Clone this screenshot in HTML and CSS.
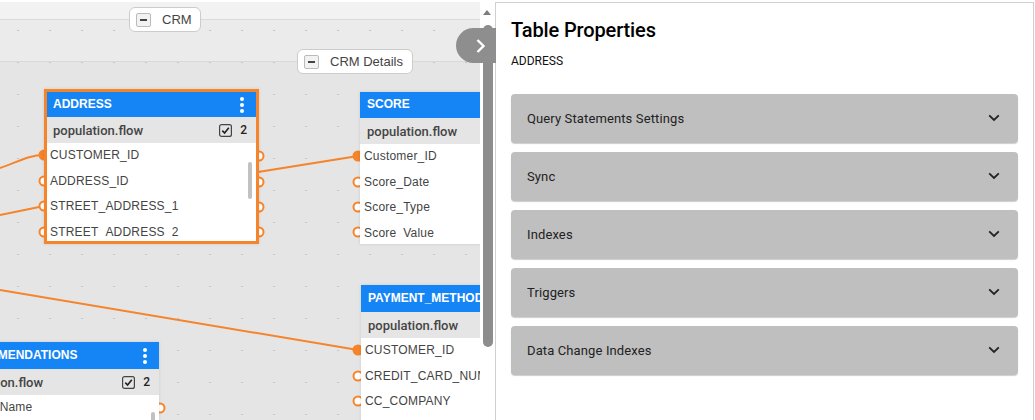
FILE: index.html
```html
<!DOCTYPE html>
<html lang="en">
<head>
    <meta charset="UTF-8">
    <meta name="viewport" content="width=device-width, initial-scale=1.0">
    <title>Table Properties</title>
    <link rel="stylesheet" href="styles.css">
</head>
<body>

<div class="app">
    <div class="canvas">
        <div class="band band-crm"></div>
        <div class="band band-details"></div>

        <svg class="wires" width="480" height="418" viewBox="0 2 480 418">
            <defs>
                <pattern id="dots" x="17" y="30" width="32" height="32" patternUnits="userSpaceOnUse">
                    <rect width="2" height="1" fill="#c4c4c4"></rect>
                </pattern>
            </defs>
            <rect x="0" y="2" width="480" height="418" fill="url(#dots)"></rect>
            <path class="wire" d="M0 168 C18 162 28 155 44 155"></path>
            <path class="wire" d="M0 215 L44 206"></path>
            <path class="wire" d="M258 172 L358 156"></path>
            <path class="wire" d="M0 290 L358 350"></path>
            <circle class="port on" cx="44" cy="155" r="4.5"></circle>
            <circle class="port" cx="44" cy="181" r="4.5"></circle>
            <circle class="port" cx="44" cy="206" r="4.5"></circle>
            <circle class="port" cx="44" cy="232" r="4.5"></circle>
            <circle class="port" cx="259" cy="156" r="4.5"></circle>
            <circle class="port" cx="259" cy="182" r="4.5"></circle>
            <circle class="port" cx="259" cy="207" r="4.5"></circle>
            <circle class="port" cx="259" cy="232" r="4.5"></circle>
            <circle class="port on" cx="358" cy="156" r="4.5"></circle>
            <circle class="port" cx="358" cy="182" r="4.5"></circle>
            <circle class="port" cx="358" cy="207" r="4.5"></circle>
            <circle class="port" cx="358" cy="232" r="4.5"></circle>
            <circle class="port on" cx="358" cy="350" r="4.5"></circle>
            <circle class="port" cx="358" cy="376" r="4.5"></circle>
            <circle class="port" cx="358" cy="401" r="4.5"></circle>
            <circle class="port" cx="160" cy="408" r="4.5"></circle>
        </svg>

        <div class="group-label label-crm">
            <span class="collapse-btn"></span>
            <span>CRM</span>
        </div>
        <div class="group-label label-details">
            <span class="collapse-btn"></span>
            <span>CRM Details</span>
        </div>

        <div class="node node-address selected">
            <div class="node-head">
                <span>ADDRESS</span>
                <span class="kebab"><i></i><i></i><i></i></span>
            </div>
            <div class="node-sub">
                <span>population.flow</span>
                <span class="sub-right">
                    <svg class="check" width="13" height="13" viewBox="0 0 13 13"><rect x="0.6" y="0.6" width="11.8" height="11.8" rx="2" fill="none" stroke="#444" stroke-width="1.2"></rect><path d="M3.3 6.6 L5.6 9 L9.8 3.8" fill="none" stroke="#222" stroke-width="1.6"></path></svg>
                    <b>2</b>
                </span>
            </div>
            <ul class="node-rows">
                <li>CUSTOMER_ID</li>
                <li>ADDRESS_ID</li>
                <li>STREET_ADDRESS_1</li>
                <li>STREET_ADDRESS_2</li>
            </ul>
            <span class="node-scroll"></span>
        </div>

        <div class="node node-score">
            <div class="node-head"><span>SCORE</span></div>
            <div class="node-sub"><span>population.flow</span></div>
            <ul class="node-rows">
                <li>Customer_ID</li>
                <li>Score_Date</li>
                <li>Score_Type</li>
                <li>Score_Value</li>
            </ul>
        </div>

        <div class="node node-payment">
            <div class="node-head"><span>PAYMENT_METHODS</span></div>
            <div class="node-sub"><span>population.flow</span></div>
            <ul class="node-rows">
                <li>CUSTOMER_ID</li>
                <li>CREDIT_CARD_NUMBER</li>
                <li>CC_COMPANY</li>
            </ul>
        </div>

        <div class="node node-recs">
            <div class="node-head">
                <span>RECOMMENDATIONS</span>
                <span class="kebab"><i></i><i></i><i></i></span>
            </div>
            <div class="node-sub">
                <span>population.flow</span>
                <span class="sub-right">
                    <svg class="check" width="13" height="13" viewBox="0 0 13 13"><rect x="0.6" y="0.6" width="11.8" height="11.8" rx="2" fill="none" stroke="#444" stroke-width="1.2"></rect><path d="M3.3 6.6 L5.6 9 L9.8 3.8" fill="none" stroke="#222" stroke-width="1.6"></path></svg>
                    <b>2</b>
                </span>
            </div>
            <ul class="node-rows">
                <li>Contact_Name</li>
            </ul>
            <span class="node-scroll"></span>
        </div>
    </div>

    <div class="scrollbar">
        <span class="scroll-up"></span>
        <span class="scroll-thumb"></span>
    </div>

    <div class="panel">
        <button class="panel-toggle" type="button">
            <svg width="12" height="16" viewBox="0 0 12 16"><path d="M2.5 2 L8.5 8 L2.5 14" fill="none" stroke="#fff" stroke-width="2.4"></path></svg>
        </button>
        <h1>Table Properties</h1>
        <p class="panel-table">ADDRESS</p>

        <div class="accordion">
            <span>Query Statements Settings</span>
            <svg class="chevron" width="12" height="8" viewBox="0 0 12 8"><path d="M1.2 1.4 L6 6 L10.8 1.4" fill="none" stroke="#222" stroke-width="1.8"></path></svg>
        </div>
        <div class="accordion">
            <span>Sync</span>
            <svg class="chevron" width="12" height="8" viewBox="0 0 12 8"><path d="M1.2 1.4 L6 6 L10.8 1.4" fill="none" stroke="#222" stroke-width="1.8"></path></svg>
        </div>
        <div class="accordion">
            <span>Indexes</span>
            <svg class="chevron" width="12" height="8" viewBox="0 0 12 8"><path d="M1.2 1.4 L6 6 L10.8 1.4" fill="none" stroke="#222" stroke-width="1.8"></path></svg>
        </div>
        <div class="accordion">
            <span>Triggers</span>
            <svg class="chevron" width="12" height="8" viewBox="0 0 12 8"><path d="M1.2 1.4 L6 6 L10.8 1.4" fill="none" stroke="#222" stroke-width="1.8"></path></svg>
        </div>
        <div class="accordion">
            <span>Data Change Indexes</span>
            <svg class="chevron" width="12" height="8" viewBox="0 0 12 8"><path d="M1.2 1.4 L6 6 L10.8 1.4" fill="none" stroke="#222" stroke-width="1.8"></path></svg>
        </div>
    </div>
</div>

</body>
</html>
```

FILE: styles.css
```css
* {
    box-sizing: border-box;
}

html, body {
    height: 100%;
}

body {
    margin: 0;
    padding-top: 2px;
    overflow: hidden;
    background-color: #fff;
    font-family: Roboto, Arial, sans-serif;
    color: #333;
}

.app {
    display: flex;
    height: 418px;
}

/* diagram */

.canvas {
    position: relative;
    flex: 0 0 480px;
    overflow: hidden;
    background-color: #e5e5e5;
}

.band {
    position: absolute;
    left: 0;
    width: 100%;
    border-bottom: 1px solid #d9d9d9;
}

.band-crm {
    top: 0;
    height: 18px;
    background-color: #f2f2f2;
}

.band-details {
    top: 18px;
    height: 42px;
    background-color: #ebebeb;
}

.wires {
    position: absolute;
    top: 0;
    left: 0;
}

.wire {
    fill: none;
    stroke: #f5842b;
    stroke-width: 2;
}

.port {
    fill: #fff;
    stroke: #f5842b;
    stroke-width: 2;
}

.port.on {
    fill: #f5842b;
}

.group-label {
    position: absolute;
    display: flex;
    align-items: center;
    gap: 11px;
    height: 25px;
    padding-left: 6px;
    background-color: #fff;
    border: 1px solid #ccc;
    border-radius: 6px;
    font-family: "Liberation Sans", Arial, sans-serif;
    font-size: 13px;
    color: #444;
}

.label-crm {
    top: 5px;
    left: 129px;
    width: 72px;
}

.label-details {
    top: 47px;
    left: 297px;
    width: 116px;
}

.collapse-btn {
    position: relative;
    width: 15px;
    height: 14px;
    background-color: #f2f2f2;
    border: 1px solid #bbb;
    border-radius: 2px;
}

.collapse-btn::after {
    content: "";
    position: absolute;
    top: 5px;
    left: 3px;
    width: 7px;
    height: 2px;
    background-color: #444;
}

.node {
    position: absolute;
    width: 213px;
    background-color: #fff;
    box-shadow: 0 0 3px rgba(0, 0, 0, 0.12);
}

.node.selected {
    width: 215px;
    border: 3px solid #f5842b;
}

.node-address {
    top: 87px;
    left: 44px;
    height: 155px;
}

.node-score {
    top: 90px;
    left: 360px;
    height: 152px;
}

.node-payment {
    top: 283px;
    left: 361px;
    height: 150px;
}

.node-recs {
    top: 340px;
    left: -54px;
    height: 150px;
}

.node-head {
    display: flex;
    align-items: center;
    justify-content: space-between;
    height: 26px;
    padding: 0 12px 2px 7px;
    background-color: #1585f5;
    color: #fff;
    font-family: "Liberation Sans", Arial, sans-serif;
    font-size: 12px;
    font-weight: 700;
}

.node-address .node-head {
    height: 25px;
    padding-left: 6px;
}

.node-payment .node-head,
.node-recs .node-head {
    height: 27px;
}

.kebab {
    display: flex;
    flex-direction: column;
    gap: 2px;
    margin-top: 2px;
}

.kebab i {
    width: 4px;
    height: 4px;
    border-radius: 50%;
    background-color: #fff;
}

.node-sub {
    display: flex;
    align-items: center;
    justify-content: space-between;
    height: 26px;
    padding: 0 9px 0 7px;
    background-color: #e5e5e5;
    font-size: 13px;
    font-weight: 500;
    color: #444;
}

.node-address .node-sub {
    padding-left: 6px;
}

.sub-right {
    display: flex;
    align-items: center;
    gap: 8px;
}

.sub-right b {
    font-size: 12px;
    font-weight: 500;
    color: #222;
}

.node-rows {
    height: 94px;
    margin: 0;
    padding: 0 0 0 4px;
    overflow: hidden;
    list-style: none;
    font-family: "Liberation Sans", Arial, sans-serif;
    font-size: 12px;
    letter-spacing: 0.2px;
    color: #444;
}

.node-address .node-rows {
    padding-left: 3px;
}

.node-rows li {
    height: 25.5px;
    line-height: 24px;
    white-space: nowrap;
}

.node-scroll {
    position: absolute;
    top: 70px;
    right: 4px;
    width: 4px;
    height: 37px;
    border-radius: 2px;
    background-color: #c1c1c1;
}

/* page scrollbar */

.scrollbar {
    position: relative;
    flex: 0 0 15px;
    background-color: #fff;
}

.scroll-up {
    position: absolute;
    top: 8px;
    left: 3px;
    border-left: 4px solid transparent;
    border-right: 4px solid transparent;
    border-bottom: 5px solid #7d7d7d;
}

.scroll-thumb {
    position: absolute;
    top: 23px;
    left: 3px;
    width: 10px;
    height: 322px;
    border-radius: 5px;
    background-color: #8d8d8d;
}

/* properties panel */

.panel {
    position: relative;
    flex: 0 0 539px;
    padding: 15px 15px 0;
    background-color: #fff;
    border: 1px solid #d0d0d0;
    border-bottom: none;
}

.panel-toggle {
    position: absolute;
    top: 25px;
    left: -40px;
    display: flex;
    align-items: center;
    justify-content: flex-end;
    width: 40px;
    height: 35px;
    padding: 0 9px 0 0;
    background-color: #8e8e8e;
    border: none;
    border-radius: 18px 0 0 18px;
}

.panel h1 {
    margin: 0;
    font-size: 20px;
    font-weight: 500;
    line-height: 24px;
    letter-spacing: -0.13px;
    color: #000;
}

.panel-table {
    margin: 11px 0 25px;
    font-size: 12px;
    line-height: 16px;
    color: #111;
}

.accordion {
    display: flex;
    align-items: center;
    justify-content: space-between;
    height: 49px;
    margin-bottom: 9px;
    padding: 0 18px 1px 16px;
    background-color: #bfbfbf;
    border-radius: 4px;
    box-shadow: 0 1px 1px rgba(0, 0, 0, 0.2);
    font-size: 13px;
    letter-spacing: 0.12px;
    color: #222;
}
```
